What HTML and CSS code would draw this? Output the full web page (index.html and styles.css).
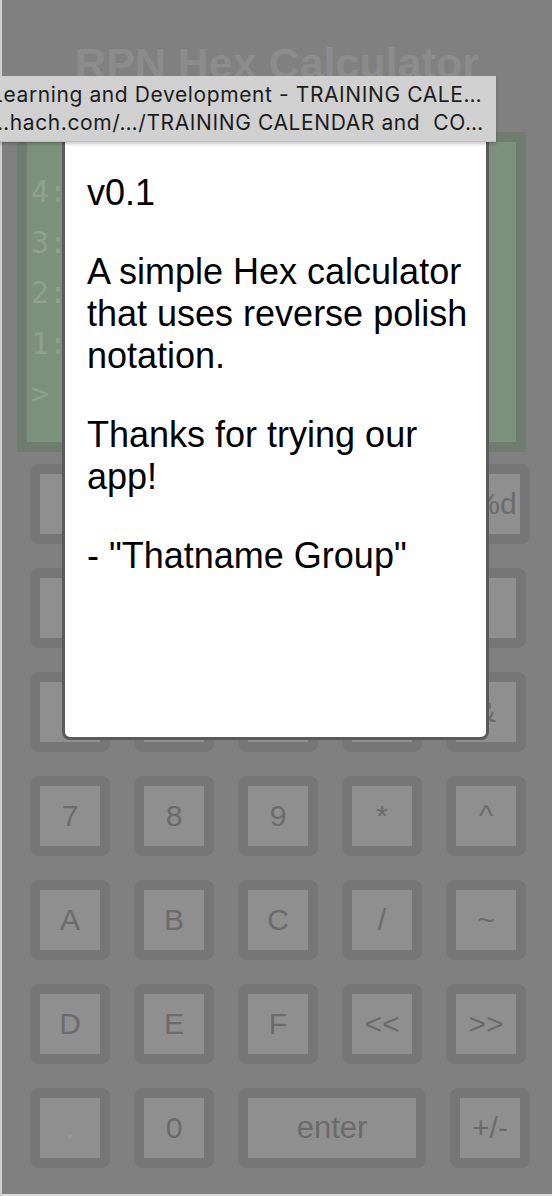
FILE: index.html
```html
<!DOCTYPE html>
<html lang="en">
<head>
<meta charset="utf-8">
<title>RPN Hex Calculator</title>
<link rel="stylesheet" href="styles.css">
</head>
<body>
<div class="page">
  <h1 class="title">RPN Hex Calculator</h1>
  <div class="display">
    <div class="stack-row">4:</div>
    <div class="stack-row">3:</div>
    <div class="stack-row">2:</div>
    <div class="stack-row">1:</div>
    <div class="stack-row">&gt;</div>
  </div>
  <div class="keys">
    <div class="key-row">
      <button class="key"></button>
      <button class="key"></button>
      <button class="key"></button>
      <button class="key"></button>
      <button class="key key-wide">%d</button>
    </div>
    <div class="key-row">
      <button class="key">1</button>
      <button class="key">2</button>
      <button class="key">3</button>
      <button class="key">+</button>
      <button class="key">|</button>
    </div>
    <div class="key-row">
      <button class="key">4</button>
      <button class="key">5</button>
      <button class="key">6</button>
      <button class="key">-</button>
      <button class="key">&amp;</button>
    </div>
    <div class="key-row">
      <button class="key">7</button>
      <button class="key">8</button>
      <button class="key">9</button>
      <button class="key">*</button>
      <button class="key">^</button>
    </div>
    <div class="key-row">
      <button class="key">A</button>
      <button class="key">B</button>
      <button class="key">C</button>
      <button class="key">/</button>
      <button class="key">~</button>
    </div>
    <div class="key-row">
      <button class="key">D</button>
      <button class="key">E</button>
      <button class="key">F</button>
      <button class="key">&lt;&lt;</button>
      <button class="key">&gt;&gt;</button>
    </div>
    <div class="key-row">
      <button class="key key-dot">.</button>
      <button class="key">0</button>
      <button class="key key-enter">enter</button>
      <button class="key">+/-</button>
    </div>
  </div>
</div>

<div class="modal">
  <p>v0.1</p>
  <p>A simple Hex calculator that uses reverse polish notation.</p>
  <p>Thanks for trying our app!</p>
  <p>- "Thatname Group"</p>
</div>

<div class="tooltip">
  <div class="tip-line">Learning and Development - TRAINING CALE…</div>
  <div class="tip-line">…hach.com/…/TRAINING CALENDAR and&nbsp; CO…</div>
</div>
</body>
</html>
```

FILE: styles.css
```css
html, body {
  margin: 0;
  padding: 0;
}

body {
  height: 100vh;
  overflow: hidden;
  background: #808080;
  box-shadow: inset 2px 0 0 #cfcfcf, inset 0 -2px 0 #dcdcdc;
  font-family: "Liberation Sans", Arial, sans-serif;
  position: relative;
}

.page {
  display: flex;
  flex-direction: column;
}

.title {
  margin: 38px 0 44px 0;
  font-size: 43px;
  line-height: 50px;
  font-weight: bold;
  text-align: center;
  color: #8c8c8c;
  padding-left: 2px;
}

.display {
  box-sizing: border-box;
  margin-left: 17px;
  width: 509px;
  height: 320px;
  border: 10px solid #6f7c6f;
  background: #7b917b;
  padding: 25px 0 0 4px;
}

.stack-row {
  font-family: "DejaVu Sans Mono", "Liberation Mono", monospace;
  font-size: 30px;
  line-height: 50.5px;
  color: #8fa08f;
}

.keys {
  margin: 12px 0 0 30px;
  display: flex;
  flex-direction: column;
  gap: 24px;
}

.key-row {
  display: flex;
  gap: 24px;
}

.key {
  box-sizing: border-box;
  width: 80px;
  height: 80px;
  margin: 0;
  padding: 0;
  border: 10px solid #767676;
  border-radius: 8px;
  background: #8f8f8f;
  color: #6b6b6b;
  font-family: "Liberation Sans", Arial, sans-serif;
  font-size: 30px;
  display: flex;
  align-items: center;
  justify-content: center;
}

.key-wide {
  width: 84px;
  padding-left: 14px;
}

.key-enter {
  width: 188px;
  font-size: 31px;
}

.key-dot {
  color: #989898;
}

.modal {
  position: absolute;
  left: 62px;
  top: 110px;
  width: 427px;
  height: 630px;
  box-sizing: border-box;
  border: 3px solid #5b5b5b;
  border-radius: 8px;
  background: #ffffff;
  padding: 22px 18px 22px 22px;
  color: #000000;
  font-family: "Liberation Sans", Arial, sans-serif;
  font-size: 36px;
  line-height: 42px;
}

.modal p {
  margin: 37px 0;
}

.tooltip {
  position: absolute;
  left: -14px;
  top: 76px;
  width: 510px;
  height: 66px;
  box-sizing: border-box;
  padding: 5px 0 0 5px;
  background: #d0d0d0;
  border-bottom: 1px solid #bdbdbd;
  box-shadow: 0 2px 3px rgba(0, 0, 0, 0.22);
  font-family: Inter, "Noto Sans", sans-serif;
  font-size: 21px;
  letter-spacing: 0.6px;
  line-height: 28px;
  color: #1c1c1c;
  white-space: nowrap;
  overflow: hidden;
}
```
